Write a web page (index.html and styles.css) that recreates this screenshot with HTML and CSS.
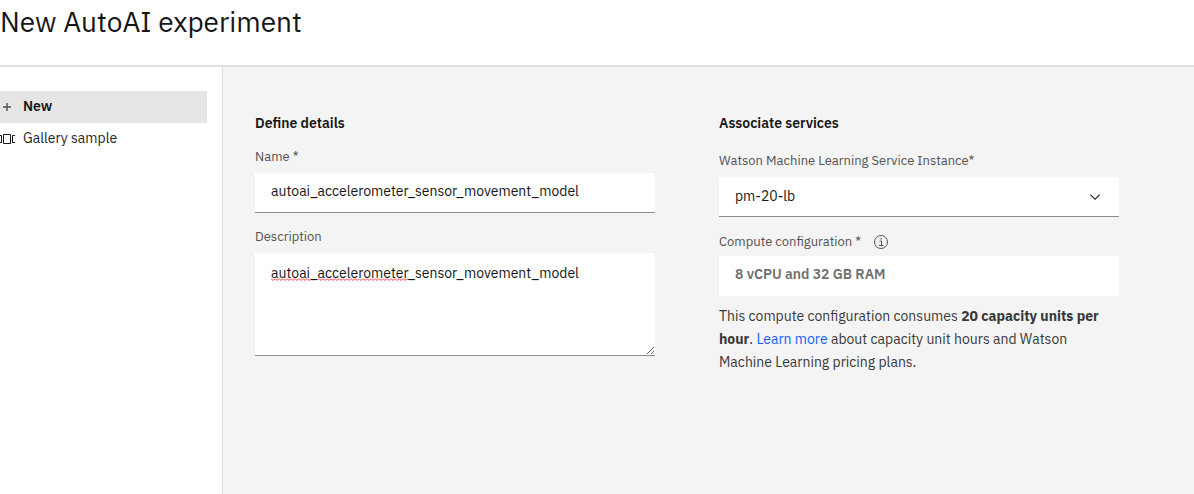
FILE: index.html
```html
<!DOCTYPE html>
<html lang="en">
<head>
  <meta charset="utf-8">
  <meta name="viewport" content="width=device-width, initial-scale=1">
  <title>New AutoAI experiment</title>
  <link rel="stylesheet" href="styles.css">
</head>
<body class="page">
  <header class="header">
    <h1 class="title">New AutoAI experiment</h1>
  </header>
  <div class="layout">
    <nav class="sidebar" aria-label="Experiment source">
      <a class="nav-link nav-link-active" href="#new" aria-current="page">
        <svg class="nav-icon" viewBox="0 0 15 16" aria-hidden="true">
          <path d="M3 9h8M7 5v8" stroke="#525252" stroke-width="1.400" fill="none"/>
        </svg>
        New
      </a>
      <a class="nav-link" href="#gallery">
        <svg class="nav-icon" viewBox="0 0 15 16" aria-hidden="true">
          <path d="M0 5.500h1.500v7H0M3.500 4.500h7v9h-7zM15 5.500h-2.500v7H15" stroke="#161616" fill="none"/>
        </svg>
        Gallery sample
      </a>
    </nav>
    <main class="content">
      <section class="panel">
        <h2 class="panel-title">Define details</h2>
        <div class="field">
          <label class="label" for="name">Name *</label>
          <input class="control" id="name" type="text" value="autoai_accelerometer_sensor_movement_model" spellcheck="false">
        </div>
        <div class="field">
          <label class="label" for="description">Description</label>
          <div class="area-wrap">
            <textarea class="control area" id="description" spellcheck="false">autoai_accelerometer_sensor_movement_model</textarea>
            <svg class="squiggle" width="137" height="3" aria-hidden="true">
              <defs>
                <pattern id="wave" width="4" height="3" patternUnits="userSpaceOnUse">
                  <path d="M0 0.500 2 2.500 4 0.500" fill="none" stroke="#f03038"/>
                </pattern>
              </defs>
              <rect width="39" height="3" fill="url(#wave)"/>
              <rect x="47" width="90" height="3" fill="url(#wave)"/>
            </svg>
          </div>
        </div>
      </section>
      <section class="panel">
        <h2 class="panel-title">Associate services</h2>
        <div class="field field-service">
          <label class="label" for="service">Watson Machine Learning Service Instance*</label>
          <div class="select-wrap">
            <select class="control select" id="service">
              <option>pm-20-lb</option>
            </select>
            <svg class="chevron" viewBox="0 0 16 16" aria-hidden="true">
              <path d="M8 11 3 6l.7-.7L8 9.600l4.300-4.300.7.7z" fill="#161616"/>
            </svg>
          </div>
        </div>
        <div class="field field-compute">
          <div class="label-row">
            <label class="label" for="compute">Compute configuration *</label>
            <button class="info" type="button" aria-label="About compute configuration">
              <svg width="16" height="16" viewBox="0 0 16 16" aria-hidden="true">
                <circle cx="8" cy="8" r="6.500" fill="none" stroke="#525252"/>
                <path d="M6.500 7H8.500V11M6 11.500H10.500" fill="none" stroke="#525252"/>
                <circle cx="8" cy="4.800" r=".8" fill="#525252"/>
              </svg>
            </button>
          </div>
          <input class="control compute" id="compute" type="text" value="8 vCPU and 32 GB RAM" readonly>
        </div>
        <p class="note">This compute configuration consumes <strong>20 capacity units per hour</strong>. <a class="link" href="#learn">Learn more</a> about capacity unit hours and Watson Machine Learning pricing plans.</p>
      </section>
    </main>
  </div>
</body>
</html>
```
FILE: styles.css
```css
* {
  box-sizing: border-box;
}

.page {
  margin: 0;
  min-height: 100vh;
  display: flex;
  flex-direction: column;
  background: #fff;
  color: #161616;
  font-family: "IBM Plex Sans", Roboto, "Liberation Sans", sans-serif;
  font-size: 14px;
  line-height: 24px;
}

.header {
  padding: 4px 0 25px;
  border-bottom: 2px solid #e0e0e0;
}

.title {
  margin: 0;
  font-size: 28px;
  font-weight: 400;
  line-height: 36px;
}

.layout {
  flex: 1;
  display: grid;
  grid-template-columns: 223px minmax(0, 1fr);
}

.sidebar {
  padding: 24px 15px 0 0;
  border-right: 1px solid #e0e0e0;
}

.nav-link {
  display: flex;
  align-items: center;
  gap: 8px;
  height: 32px;
  padding-bottom: 2px;
  color: #262626;
  text-decoration: none;
}

.nav-link-active {
  background: #e5e5e5;
  color: #161616;
  font-weight: 600;
}

.nav-icon {
  width: 15px;
  height: 16px;
}

.content {
  display: grid;
  grid-template-columns: repeat(2, minmax(0, 400px));
  align-items: start;
  gap: 64px;
  padding: 44px 32px 32px;
  background: #f4f4f4;
}

.panel-title {
  margin: 0 0 14px;
  font-size: 14px;
  font-weight: 600;
  line-height: 24px;
}

.field {
  margin-bottom: 16px;
}

.label {
  display: block;
  margin-bottom: 8px;
  color: #525252;
  font-size: 13px;
  line-height: 16px;
}

.control {
  display: block;
  width: 100%;
  height: 40px;
  margin: 0;
  padding: 0 16px 4px;
  border: 0;
  border-bottom: 1px solid #8d8d8d;
  border-radius: 0;
  background: #fff;
  color: #161616;
  font: inherit;
}

.area-wrap,
.select-wrap {
  position: relative;
}

.area {
  height: 103px;
  padding: 8px 16px;
  resize: vertical;
}

.squiggle {
  position: absolute;
  top: 25px;
  left: 16px;
  pointer-events: none;
}

.select {
  padding-bottom: 2px;
  appearance: none;
}

.chevron {
  position: absolute;
  top: 12px;
  right: 16px;
  width: 16px;
  height: 16px;
  pointer-events: none;
}

.field-service {
  margin: 18px 0 17px;
}

.label-row {
  display: flex;
  align-items: center;
  gap: 12px;
  margin-bottom: 6px;
}

.label-row .label {
  margin: 0;
}

.info {
  width: 16px;
  height: 16px;
  padding: 0;
  border: 0;
  background: none;
}

.info svg {
  display: block;
}

.field-compute {
  margin-bottom: 9px;
}

.compute {
  border: 0;
  color: #6f6f6f;
  font-weight: 600;
}

.note {
  margin: 0;
  color: #393939;
  line-height: 23px;
}

.link {
  color: #0f62fe;
  text-decoration: none;
}
```
